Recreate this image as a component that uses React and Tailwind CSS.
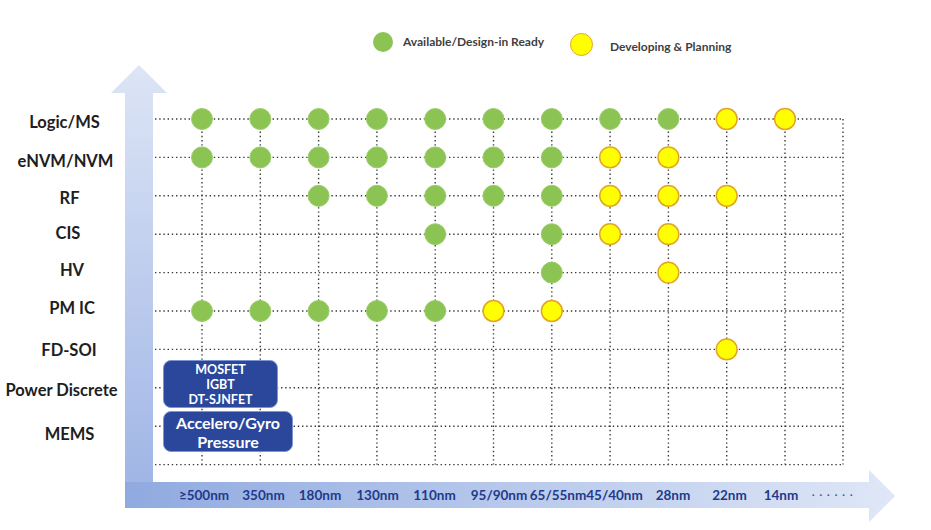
import React from "react";

const COLS = Array.from({ length: 11 }, (_, i) => 202 + 58.3 * i);
const ROWS = Array.from({ length: 10 }, (_, j) => 119 + 38.4 * j);
const LEFT = 155;
const RIGHT = 843;

const G = "g";
const Y = "y";
const DOTS = [
  [G, G, G, G, G, G, G, G, G, Y, Y],
  [G, G, G, G, G, G, G, Y, Y, null, null],
  [null, null, G, G, G, G, G, Y, Y, Y, null],
  [null, null, null, null, G, null, G, Y, Y, null, null],
  [null, null, null, null, null, null, G, null, Y, null, null],
  [G, G, G, G, G, Y, Y, null, null, null, null],
  [null, null, null, null, null, null, null, null, null, Y, null],
];

const ROW_LABELS = [
  { t: "Logic/MS", w: "w-[129px]", mt: "mt-0" },
  { t: "eNVM/NVM", w: "w-[131px]", mt: "mt-[19px]" },
  { t: "RF", w: "w-[139px]", mt: "mt-[17px]" },
  { t: "CIS", w: "w-[136px]", mt: "mt-[15px]" },
  { t: "HV", w: "w-[144px]", mt: "mt-[17px]" },
  { t: "PM IC", w: "w-[144px]", mt: "mt-[18px]" },
  { t: "FD-SOI", w: "w-[138px]", mt: "mt-[22px]" },
  { t: "Power Discrete", w: "w-[123px]", mt: "mt-[20px]" },
  { t: "MEMS", w: "w-[139px]", mt: "mt-[24px]" },
];

const NODES = [
  { t: "≥500nm", w: "w-[60px]" },
  { t: "350nm", w: "w-[59px]" },
  { t: "180nm", w: "w-[54px]" },
  { t: "130nm", w: "w-[61px]" },
  { t: "110nm", w: "w-[53px]" },
  { t: "95/90nm", w: "w-[76px]" },
  { t: "65/55nm", w: "w-[42px]" },
  { t: "45/40nm", w: "w-[71px]" },
  { t: "28nm", w: "w-[46px]" },
  { t: "22nm", w: "w-[67px]" },
  { t: "14nm", w: "w-[36px]" },
];

function Chart() {
  return (
    <svg
      className="absolute inset-0"
      width="931"
      height="530"
      viewBox="0 0 931 530"
    >
      <defs>
        <linearGradient id="vg" x1="0" y1="65" x2="0" y2="508" gradientUnits="userSpaceOnUse">
          <stop offset="0" stopColor="#dde5f6" />
          <stop offset="1" stopColor="#9db3e5" />
        </linearGradient>
        <linearGradient id="hg" x1="125" y1="0" x2="895" y2="0" gradientUnits="userSpaceOnUse">
          <stop offset="0" stopColor="#90aae0" />
          <stop offset="1" stopColor="#dfe7f7" />
        </linearGradient>
      </defs>
      {/* vertical arrow */}
      <polygon points="125,508 125,93 111,93 139,65 167,93 153,93 153,508" fill="url(#vg)" />
      {/* horizontal arrow */}
      <polygon points="125,482 869,482 869,470 895,496 869,522 869,508 125,508" fill="url(#hg)" />
      {/* grid */}
      <g stroke="#3a3a3a" strokeWidth="1.4" strokeDasharray="1.4 2.8" fill="none">
        {ROWS.map((y, i) => (
          <line key={"h" + i} x1={LEFT} y1={y} x2={RIGHT} y2={y} />
        ))}
        {[...COLS, RIGHT].map((x, i) => (
          <line key={"v" + i} x1={x} y1={ROWS[0]} x2={x} y2={ROWS[9]} />
        ))}
      </g>
      {DOTS.map((row, j) =>
        row.map((d, i) =>
          d === G ? (
            <circle key={j + "-" + i} cx={COLS[i]} cy={ROWS[j]} r="10.5" fill="#8cc454" stroke="#9ccc6c" strokeWidth="1" />
          ) : d === Y ? (
            <circle key={j + "-" + i} cx={COLS[i]} cy={ROWS[j]} r="10.4" fill="#ffff00" stroke="#e2a524" strokeWidth="1.5" />
          ) : null
        )
      )}
    </svg>
  );
}

export default function App() {
  return (
    <div className="relative w-[931px] h-[530px] overflow-hidden bg-white font-['Lato',sans-serif]">
      <Chart />
      <div className="relative flex flex-col">
        {/* legend */}
        <div className="flex h-[60px] items-start">
          <div className="ml-[373px] flex w-[197px] items-start">
            <div className="mt-[32px] h-[20px] w-[20px] shrink-0 rounded-full bg-[#8cc454]" />
            <div className="ml-[10px] mt-[34px] whitespace-nowrap text-[12px] font-bold leading-[16px] text-[#3f3f3f]">
              Available/Design-in Ready
            </div>
          </div>
          <div className="flex items-start">
            <div className="mt-[33px] h-[23px] w-[23px] shrink-0 rounded-full border-[1.5px] border-[#e2a524] bg-[#ffff00]" />
            <div className="ml-[17px] mt-[39px] whitespace-nowrap text-[12px] font-bold leading-[16px] text-[#3f3f3f]">
              Developing &amp; Planning
            </div>
          </div>
        </div>

        {/* main row */}
        <div className="flex h-[420px]">
          <div className="flex w-[125px] shrink-0 flex-col pt-[52px]">
            {ROW_LABELS.map((l) => (
              <div
                key={l.t}
                className={`${l.w} ${l.mt} h-[20px] shrink-0 whitespace-nowrap text-center text-[16.5px] font-bold leading-[20px] text-[#1e1e1e]`}
              >
                {l.t}
              </div>
            ))}
          </div>
          <div className="ml-[38px] flex flex-col pt-[300px]">
            <div className="flex h-[48px] w-[115px] flex-col items-center justify-center rounded-[8px] border border-[#7d95d3] bg-[#2a479c] text-[12.5px] font-bold leading-[15px] text-white">
              <span>MOSFET</span>
              <span>IGBT</span>
              <span>DT-SJNFET</span>
            </div>
            <div className="mt-[3px] flex h-[41px] w-[130px] flex-col items-center justify-center rounded-[8px] border border-[#7d95d3] bg-[#2a479c] text-[16px] font-bold leading-[19px] text-white">
              <span>Accelero/Gyro</span>
              <span>Pressure</span>
            </div>
          </div>
        </div>

        {/* x axis labels */}
        <div className="flex h-[30px] items-center pl-[174px]">
          {NODES.map((n) => (
            <div
              key={n.t}
              className={`${n.w} flex shrink-0 justify-center whitespace-nowrap text-[13.5px] font-bold leading-[16px] text-[#1f3a8a]`}
            >
              {n.t}
            </div>
          ))}
          <div className="flex w-[71px] shrink-0 justify-center whitespace-nowrap text-[12px] leading-[16px] tracking-[4.5px] text-[#4a5a80]">
            ······
          </div>
        </div>
      </div>
    </div>
  );
}
